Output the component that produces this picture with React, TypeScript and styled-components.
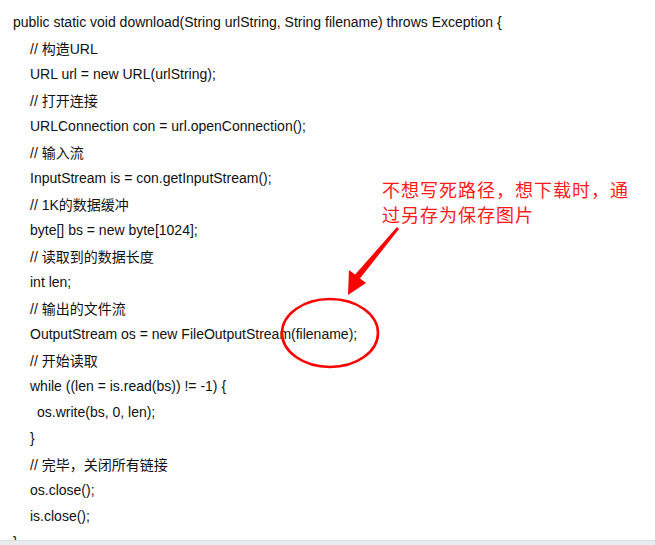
import React from "react";
import styled, { createGlobalStyle } from "styled-components";

const Global = createGlobalStyle`
  html, body { margin: 0; padding: 0; background: #ffffff; }
  #root { width: 655px; height: 545px; overflow: hidden; }
`;

const Page = styled.div`
  position: relative;
  width: 655px;
  height: 545px;
  display: flex;
  flex-direction: column;
  background: #ffffff;
  overflow: hidden;
`;

const Viewport = styled.div`
  flex: 1;
  overflow: hidden;
  padding-top: 9px;
`;

const Code = styled.div`
  display: flex;
  flex-direction: column;
  font-family: "Liberation Sans", Arial, "Noto Sans CJK SC", sans-serif;
  font-size: 14px;
  color: #111111;
`;

const Line = styled.div<{ $indent: number }>`
  height: 26px;
  line-height: 26px;
  white-space: pre;
  padding-left: ${(p) => p.$indent}px;
`;

const Cjk = styled.span`
  font-family: "Noto Sans CJK SC", sans-serif;
  font-size: 14px;
`;

const Strip = styled.div`
  height: 4px;
  background: #e9edf1;
  border-top: 1px solid #d8dee4;
`;

const Note = styled.div`
  position: absolute;
  left: 382px;
  top: 177px;
  width: 260px;
  font-family: "Noto Sans CJK SC", sans-serif;
  font-size: 18px;
  line-height: 25px;
  letter-spacing: 1px;
  color: #ff1a1a;
`;

const Overlay = styled.svg`
  position: absolute;
  left: 0;
  top: 0;
  pointer-events: none;
`;

type L = { i: number; t: React.ReactNode };

const lines: L[] = [
  { i: 13, t: "public static void download(String urlString, String filename) throws Exception {" },
  { i: 30, t: <>// <Cjk>构造</Cjk>URL</> },
  { i: 30, t: "URL url = new URL(urlString);" },
  { i: 30, t: <>// <Cjk>打开连接</Cjk></> },
  { i: 30, t: "URLConnection con = url.openConnection();" },
  { i: 30, t: <>// <Cjk>输入流</Cjk></> },
  { i: 30, t: "InputStream is = con.getInputStream();" },
  { i: 30, t: <>// 1K<Cjk>的数据缓冲</Cjk></> },
  { i: 30, t: "byte[] bs = new byte[1024];" },
  { i: 30, t: <>// <Cjk>读取到的数据长度</Cjk></> },
  { i: 30, t: "int len;" },
  { i: 30, t: <>// <Cjk>输出的文件流</Cjk></> },
  { i: 30, t: "OutputStream os = new FileOutputStream(filename);" },
  { i: 30, t: <>// <Cjk>开始读取</Cjk></> },
  { i: 30, t: "while ((len = is.read(bs)) != -1) {" },
  { i: 37, t: "os.write(bs, 0, len);" },
  { i: 30, t: "}" },
  { i: 30, t: <>// <Cjk>完毕，关闭所有链接</Cjk></> },
  { i: 30, t: "os.close();" },
  { i: 30, t: "is.close();" },
  { i: 13, t: "}" },
];

export default function App() {
  return (
    <>
      <Global />
      <Page>
        <Viewport>
          <Code>
            {lines.map((l, k) => (
              <Line key={k} $indent={l.i}>
                {l.t}
              </Line>
            ))}
          </Code>
        </Viewport>
        <Strip />
        <Note>
          不想写死路径，想下载时，通
          <br />
          过另存为保存图片
        </Note>
        <Overlay width="655" height="545" viewBox="0 0 655 545">
          <ellipse cx="330" cy="333" rx="48" ry="34" fill="none" stroke="#ff0000" strokeWidth="2.6" />
          <polygon points="397,227 399,229 358,281 353,277" fill="#ff0000" />
          <polygon points="348,295 349,270 366,283" fill="#ff0000" />
        </Overlay>
      </Page>
    </>
  );
}
